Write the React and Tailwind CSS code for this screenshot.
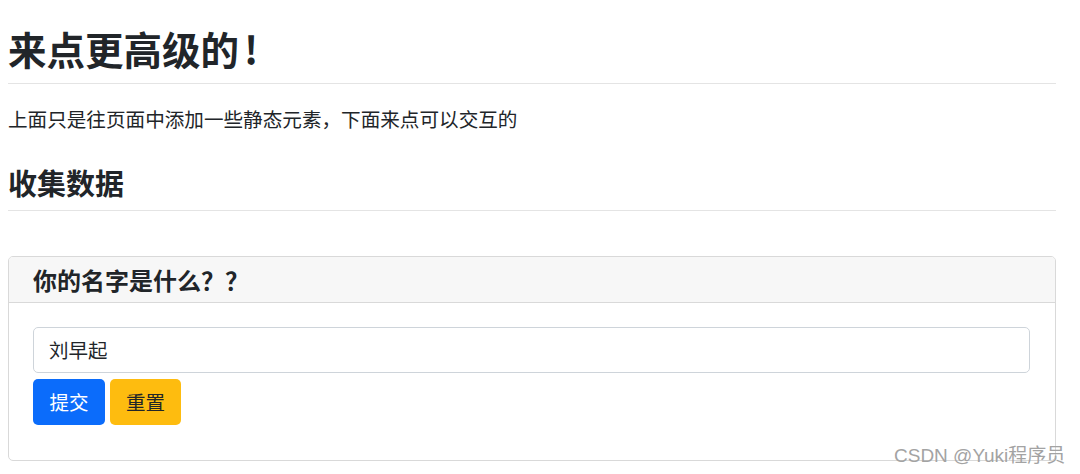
export default function App() {
  const font = { fontFamily: '"Noto Sans CJK SC", "Noto Sans", "Liberation Sans", sans-serif' };
  return (
    <div className="relative w-[1080px] h-[474px] bg-white overflow-hidden text-[#212529]" style={font}>
      <div className="w-[1048px] ml-2">
        <div className="pt-[26px] pb-[13px] border-b border-[#e4e4e4]">
          <h1 className="text-[38.5px] leading-[44px] font-bold">
            来点更高级的<span className="ml-[5px]">!</span>
          </h1>
        </div>
        <p className="mt-[21px] text-[19.6px] leading-[28px]">上面只是往页面中添加一些静态元素，下面来点可以交互的</p>
        <div className="mt-[32px] pb-[11px] border-b border-[#e4e4e4]">
          <h2 className="text-[29px] leading-[34px] font-bold">收集数据</h2>
        </div>
        <div className="mt-[45px] border border-[#d9d9d9] rounded-[5px] overflow-hidden">
          <div className="h-[46px] bg-[#f7f7f7] border-b border-[#d9d9d9] pl-6 flex items-center">
            <h3 className="text-[24px] leading-[30px] font-bold">你的名字是什么？？</h3>
          </div>
          <div className="pt-6 pb-[35px] pl-6 pr-[25px]">
            <div className="h-[46px] border border-[#ced4da] rounded-[5px] pl-[15px] flex items-center text-[19.5px]">
              刘早起
            </div>
            <div className="mt-[6px] flex gap-[5px]">
              <button className="h-[46px] w-[72px] rounded-[5px] bg-[#0b6cfb] text-white text-[19.5px]">提交</button>
              <button className="h-[46px] w-[71px] rounded-[5px] bg-[#febc0f] text-[#212529] text-[19.5px]">重置</button>
            </div>
          </div>
        </div>
      </div>
      <div className="absolute left-[894px] top-[443px] text-[19px] leading-[26px] text-[#a3a3a3]" style={{ fontFamily: '"Liberation Sans", "Noto Sans CJK SC", sans-serif' }}>
        CSDN @Yuki程序员
      </div>
    </div>
  );
}
